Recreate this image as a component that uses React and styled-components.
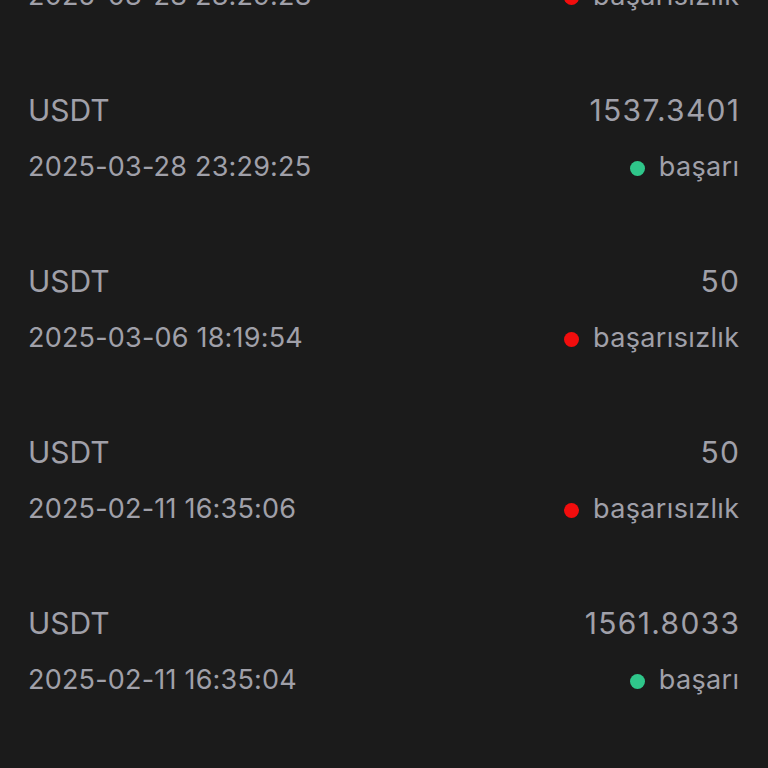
import React from "react";
import styled, { createGlobalStyle } from "styled-components";

const Global = createGlobalStyle`
  html, body { margin: 0; padding: 0; background: #1b1b1b; }
  body { font-family: Inter, "Liberation Sans", sans-serif; overflow: hidden; }
`;

const Page = styled.div`
  width: 768px;
  height: 768px;
  overflow: hidden;
  background: #1b1b1b;
`;

const List = styled.div`
  display: flex;
  flex-direction: column;
  margin-top: -118px;
`;

const Row = styled.div`
  display: flex;
  flex-direction: column;
  gap: 16px;
  padding: 37px 29px 38px 28px;
`;

const Line = styled.div`
  display: flex;
  align-items: center;
  justify-content: space-between;
  height: 40px;
  color: #a0a0a9;
`;

const Coin = styled.span`
  font-size: 30px;
  font-weight: 400;
`;

const Amount = styled.span`
  font-size: 30px;
  font-weight: 400;
  letter-spacing: 1.3px;
  margin-right: -1.3px;
`;

const Time = styled.span`
  font-size: 27px;
  font-weight: 400;
  letter-spacing: 0.2px;
`;

const Status = styled.span`
  display: flex;
  align-items: center;
  gap: 14px;
  font-size: 27px;
  letter-spacing: 0.35px;
  margin-right: -0.35px;
`;

const Dot = styled.span`
  width: 15px;
  height: 15px;
  border-radius: 50%;
  margin-top: 5px;
  background: ${(p) => (p.$ok ? "#2fc68a" : "#f20d0d")};
`;

const rows = [
  { amount: "50", time: "2025-03-28 23:29:28", ok: false },
  { amount: "1537.3401", time: "2025-03-28 23:29:25", ok: true },
  { amount: "50", time: "2025-03-06 18:19:54", ok: false },
  { amount: "50", time: "2025-02-11 16:35:06", ok: false },
  { amount: "1561.8033", time: "2025-02-11 16:35:04", ok: true },
];

export default function App() {
  return (
    <Page>
      <Global />
      <List>
        {rows.map((r, i) => (
          <Row key={i}>
            <Line>
              <Coin>USDT</Coin>
              <Amount>{r.amount}</Amount>
            </Line>
            <Line>
              <Time>{r.time}</Time>
              <Status>
                <Dot $ok={r.ok} />
                {r.ok ? "başarı" : "başarısızlık"}
              </Status>
            </Line>
          </Row>
        ))}
      </List>
    </Page>
  );
}
